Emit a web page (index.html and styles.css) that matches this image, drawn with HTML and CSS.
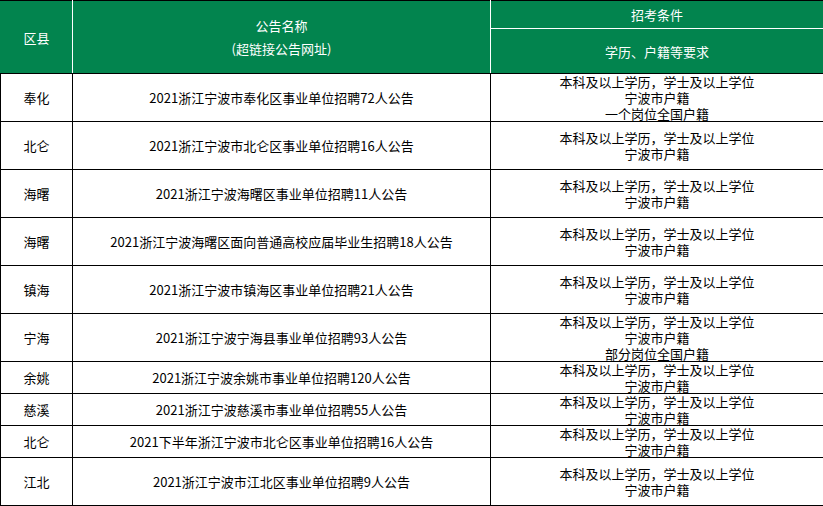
FILE: index.html
```html
<!DOCTYPE html>
<html lang="zh-CN">
<head>
<meta charset="utf-8">
<title>宁波事业单位招聘公告</title>
<link rel="stylesheet" href="styles.css">
</head>
<body>
<table class="recruit">
  <colgroup>
    <col class="c-area">
    <col class="c-name">
    <col class="c-req">
  </colgroup>
  <thead>
    <tr class="h1">
      <th rowspan="2" class="hd hd-first">区县</th>
      <th rowspan="2" class="hd hd-two">公告名称<br>(超链接公告网址)</th>
      <th class="hd hd-last">招考条件</th>
    </tr>
    <tr class="h2">
      <th class="hd hd-last">学历、户籍等要求</th>
    </tr>
  </thead>
  <tbody>
    <tr class="r48"><td>奉化</td><td>2021浙江宁波市奉化区事业单位招聘72人公告</td><td><div class="req">本科及以上学历，学士及以上学位<br>宁波市户籍<br>一个岗位全国户籍</div></td></tr>
    <tr class="r48"><td>北仑</td><td>2021浙江宁波市北仑区事业单位招聘16人公告</td><td><div class="req">本科及以上学历，学士及以上学位<br>宁波市户籍</div></td></tr>
    <tr class="r48"><td>海曙</td><td>2021浙江宁波海曙区事业单位招聘11人公告</td><td><div class="req">本科及以上学历，学士及以上学位<br>宁波市户籍</div></td></tr>
    <tr class="r48"><td>海曙</td><td>2021浙江宁波海曙区面向普通高校应届毕业生招聘18人公告</td><td><div class="req">本科及以上学历，学士及以上学位<br>宁波市户籍</div></td></tr>
    <tr class="r48"><td>镇海</td><td>2021浙江宁波市镇海区事业单位招聘21人公告</td><td><div class="req">本科及以上学历，学士及以上学位<br>宁波市户籍</div></td></tr>
    <tr class="r48"><td>宁海</td><td>2021浙江宁波宁海县事业单位招聘93人公告</td><td><div class="req">本科及以上学历，学士及以上学位<br>宁波市户籍<br>部分岗位全国户籍</div></td></tr>
    <tr class="r32"><td>余姚</td><td>2021浙江宁波余姚市事业单位招聘120人公告</td><td><div class="req">本科及以上学历，学士及以上学位<br>宁波市户籍</div></td></tr>
    <tr class="r32"><td>慈溪</td><td>2021浙江宁波慈溪市事业单位招聘55人公告</td><td><div class="req">本科及以上学历，学士及以上学位<br>宁波市户籍</div></td></tr>
    <tr class="r32"><td>北仑</td><td>2021下半年浙江宁波市北仑区事业单位招聘16人公告</td><td><div class="req">本科及以上学历，学士及以上学位<br>宁波市户籍</div></td></tr>
    <tr class="r48"><td>江北</td><td>2021浙江宁波市江北区事业单位招聘9人公告</td><td><div class="req">本科及以上学历，学士及以上学位<br>宁波市户籍</div></td></tr>
  </tbody>
</table>
</body>
</html>
```

FILE: styles.css
```css
html, body {
  margin: 0;
  padding: 0;
  background: #ffffff;
}

.recruit {
  border-collapse: collapse;
  table-layout: fixed;
  width: 823px;
  font-family: "Noto Sans CJK SC", "Noto Sans", sans-serif;
}

.c-area { width: 72px; }
.c-name { width: 418px; }
.c-req { width: 333px; }

.hd {
  background: #02844e;
  color: #ffffff;
  font-weight: normal;
  font-size: 13px;
  line-height: 23px;
  text-align: center;
  vertical-align: middle;
  padding: 0;
  border: 1px solid #ffffff;
  border-top-color: #000000;
  border-bottom-color: #000000;
}

.hd-first { border-left-color: #02844e; }
.hd-last { border-right-color: #02844e; }
.h1 .hd-last { border-bottom-color: #ffffff; }
.h2 .hd-last { border-top-color: #ffffff; }

.h1 { height: 28px; }
.h2 { height: 45px; }

.recruit td {
  border: 1px solid #000000;
  padding: 0;
  text-align: center;
  vertical-align: middle;
  font-size: 13px;
  font-weight: 400;
  line-height: 16px;
  color: #000000;
  white-space: nowrap;
}

.req {
  margin: -1px 0;
}

.r48 { height: 48px; }
.r32 { height: 32px; }
```
